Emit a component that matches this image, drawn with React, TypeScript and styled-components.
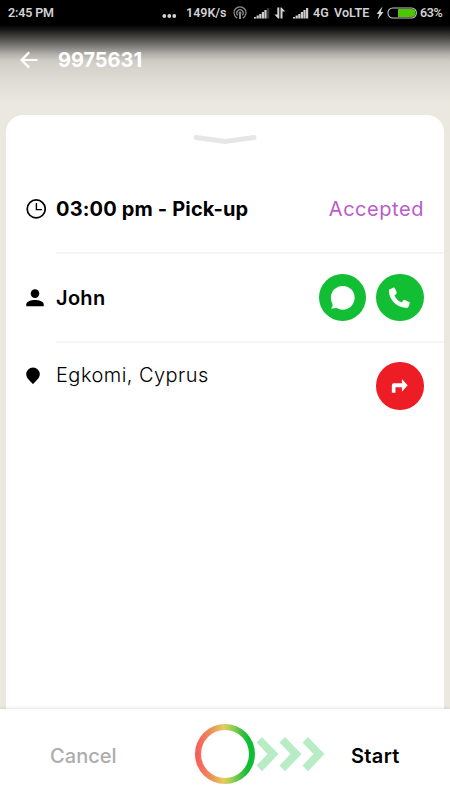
import React from "react";
import styled, { createGlobalStyle } from "styled-components";

const Global = createGlobalStyle`
  * { box-sizing: border-box; }
  body { margin: 0; background: #ebe8e0; }
`;

const Screen = styled.div`
  width: 450px;
  height: 800px;
  overflow: hidden;
  display: flex;
  flex-direction: column;
  font-family: Inter, "Liberation Sans", sans-serif;
  background: linear-gradient(
    to bottom,
    #000 0, #000 25px, #1b1a1a 30px, #4a4947 38px, #7c7b77 46px,
    #b0aea9 54px, #cfccc6 61px, #d6d3cc 68px, #e1ded7 84px, #ebe8e0 102px
  );
`;

const StatusBar = styled.div`
  height: 26px;
  flex: none;
  display: flex;
  align-items: center;
  padding-left: 8px;
  color: #d2d2d2;
  font-family: Roboto, "Liberation Sans", sans-serif;

  svg { flex: none; display: block; }
`;

const StatusText = styled.span<{ $w: number; $ls?: number }>`
  width: ${(p) => p.$w}px;
  flex: none;
  font-size: 12.5px;
  font-weight: 600;
  line-height: 26px;
  white-space: nowrap;
  letter-spacing: ${(p) => p.$ls ?? 0}px;
`;

const Header = styled.header`
  height: 89px;
  flex: none;
  display: flex;
  align-items: flex-start;
  padding: 22px 0 0 20px;
`;

const BackButton = styled.button`
  width: 38px;
  height: 24px;
  padding: 0 0 1px;
  border: 0;
  background: none;

  svg { display: block; }
`;

const Label = styled.span<{ $weight: number; $ls?: number; $color?: string }>`
  font-size: 20px;
  font-weight: ${(p) => p.$weight};
  letter-spacing: ${(p) => p.$ls ?? 0}px;
  color: ${(p) => p.$color ?? "#000"};
  line-height: 24px;
  white-space: nowrap;
`;

const PersonName = styled(Label)`
  padding-top: 12px;
`;

const Sheet = styled.main`
  flex: 1;
  margin: 0 6px;
  border-radius: 17px 17px 0 0;
  background: #fff;
`;

const Handle = styled.div`
  height: 50px;
  display: flex;
  justify-content: center;
  padding-top: 19px;
`;

const Row = styled.section`
  height: 89px;
  display: flex;
  padding-left: 20px;
`;

const IconCell = styled.div<{ $top: number }>`
  width: 30px;
  flex: none;
  padding-top: ${(p) => p.$top}px;

  svg { display: block; }
`;

const RowBody = styled.div<{ $line?: boolean; $top: number }>`
  flex: 1;
  display: flex;
  justify-content: space-between;
  align-items: flex-start;
  padding: ${(p) => p.$top}px 20px 0 0;
  border-bottom: ${(p) => (p.$line ? "2px solid #f5f5f5" : "0")};
`;

const Actions = styled.div<{ $lift?: number }>`
  display: flex;
  gap: 10px;
  margin-top: ${(p) => -(p.$lift ?? 0)}px;
  padding-right: 0.3px;
`;

const RoundButton = styled.button<{ $bg: string }>`
  width: 47.5px;
  height: 47.5px;
  padding: 0;
  border: 0;
  border-radius: 50%;
  background: ${(p) => p.$bg};

  svg { display: block; width: 100%; height: 100%; }
`;

const Footer = styled.footer`
  height: 91px;
  flex: none;
  display: flex;
  align-items: flex-start;
  padding-left: 50px;
  background: #fff;
  box-shadow: 0 -1px 3px rgba(0, 0, 0, 0.1);
  z-index: 1;
`;

const FooterSlot = styled.div<{ $w: number }>`
  width: ${(p) => p.$w}px;
  padding-top: 35px;
  flex: none;
`;

const Slider = styled.div`
  width: 156px;
  display: flex;
  padding-top: 15px;
`;

const Ring = styled.div`
  width: 60px;
  height: 60px;
  padding: 6px;
  border-radius: 50%;
  background: linear-gradient(to right, #fb5a5a 2%, #ec8d58 25%, #e6cd5c 48%, #a2cf55 60%, #3fc043 78%, #10be35 88%);

  &::after {
    content: "";
    display: block;
    height: 48px;
    border-radius: 50%;
    background: #fff;
  }
`;

const SignalBars = ({ weakLast }: { weakLast?: boolean }) => (
  <svg width="16" height="12" viewBox="0 0 16 12">
    {[1.5, 3, 4.5, 6.5, 8.5, 10.5].map((h, i) => (
      <rect key={i} x={i * 2.6} y={11.5 - h} width="2.2" height={h} fill={weakLast && i === 5 ? "#383838" : "#cecece"} />
    ))}
  </svg>
);

export default function App() {
  return (
    <Screen>
      <Global />
      <StatusBar>
        <StatusText $w={154} $ls={-0.15}>2:45 PM</StatusText>
        <svg width="24" height="26" viewBox="0 0 24 26" fill="#d2d2d2">
          <circle cx="2.3" cy="16" r="1.9" /><circle cx="7.3" cy="16" r="1.9" /><circle cx="12.3" cy="16" r="1.9" />
        </svg>
        <StatusText $w={47}>149K/s</StatusText>
        <svg width="21" height="14" viewBox="0 0 21 14" fill="none" stroke="#8d8d8d" strokeWidth="1.2">
          <path d="M4.2 12.1a6 6 0 1 1 5.6 0" />
          <path d="M4.7 9.3a3.2 3.2 0 1 1 4.6 0" />
          <circle cx="7" cy="7" r=".8" fill="#8d8d8d" />
          <path d="M7 8v5" strokeWidth="2" />
        </svg>
        <SignalBars weakLast />
        <svg width="23" height="14" viewBox="0 0 23 14" fill="#d2d2d2">
          <path d="M7.3 1.5H9.3V12.5H8L4.5 8.5H7.3z" />
          <path d="M10.5 1.5H11.5L15.2 5.5H12.5V12.5H10.5z" />
        </svg>
        <SignalBars />
        <svg width="4" height="12" />
        <StatusText $w={21}>4G</StatusText>
        <StatusText $w={41} $ls={0.1}>VoLTE</StatusText>
        <svg width="45" height="14" viewBox="0 0 45 14">
          <path d="M7.5.5 1.5 8H4.2l-1.5 5.5L8.5 6H5.8z" fill="#d2d2d2" />
          <rect x="12.9" y="2" width="28.5" height="10" rx="5" fill="#000" stroke="#c8c8c8" strokeWidth="1.1" />
          <path d="M23 3H36.5a4 4 0 0 1 4 4A4 4 0 0 1 36.5 11H23z" fill="#4cc600" />
        </svg>
        <StatusText $w={30} $ls={-0.35}>63%</StatusText>
      </StatusBar>
      <Header>
        <BackButton aria-label="Back">
          <svg width="18" height="18" viewBox="0 0 18 18" fill="none" stroke="#fff" strokeWidth="2.2">
            <path d="M17.5 9H2M9.2 1.4 1.6 9l7.6 7.6" />
          </svg>
        </BackButton>
        <Label $weight={700} $color="#fff" $ls={-0.05}>9975631</Label>
      </Header>
      <Sheet>
        <Handle>
          <svg width="64" height="12" viewBox="0 0 64 12">
            <path d="M3 3.5 32 7.5 61 3.5" fill="none" stroke="#e6e6e6" strokeWidth="5" strokeLinecap="round" />
          </svg>
        </Handle>
        <Row>
          <IconCell $top={34}>
            <svg width="20" height="20" viewBox="0 0 20 20" fill="none" stroke="#000">
              <circle cx="10.2" cy="9.9" r="9" strokeWidth="1.7" />
              <path d="M10.4 4v6.6H16" strokeWidth="1.4" />
            </svg>
          </IconCell>
          <RowBody $line $top={32}>
            <Label $weight={700} $ls={0.16}>03:00 pm - Pick-up</Label>
            <Label $weight={400} $ls={0.55} $color="#b95cc8">Accepted</Label>
          </RowBody>
        </Row>
        <Row>
          <IconCell $top={35}>
            <svg width="18" height="18" viewBox="0 0 18 18">
              <circle cx="9" cy="4.6" r="4.3" />
              <path d="M.3 17.3v-2.1C.3 12.4 5.5 11 9 11s8.7 1.4 8.7 4.2v2.1z" />
            </svg>
          </IconCell>
          <RowBody $line $top={20}>
            <PersonName $weight={600} $ls={0.3}>John</PersonName>
            <Actions $lift={0.3}>
              <RoundButton $bg="#12be34" aria-label="Message">
                <svg viewBox="0 0 48 48" fill="#fff">
                  <circle cx="24" cy="24" r="12" />
                  <path d="M13.3 29.5c1 2.5.2 4-1.3 5.2 2.6.6 5.6 0 8-1.5z" />
                </svg>
              </RoundButton>
              <RoundButton $bg="#12be34" aria-label="Call">
                <svg viewBox="0 0 48 48" fill="#fff">
                  <path d="M14 15.3 17.6 13.6c.6-.2 1 0 1.3.6l2 4.3c.2.6.1 1-.3 1.4l-1.9 1.7c1.4 3.2 3.8 5.6 7.2 7l1.8-2c.4-.5.9-.6 1.5-.3l4.3 2c.6.3.8.7.6 1.3l-1.3 3.7c-.3.7-.8 1-1.5 1C21.5 34.3 13 26 13 16.9c0-.8.3-1.3 1-1.6z" />
                </svg>
              </RoundButton>
            </Actions>
          </RowBody>
        </Row>
        <Row>
          <IconCell $top={24}>
            <svg width="14" height="18" viewBox="0 0 14 18">
              <path d="M7 .5a6.8 6.8 0 0 1 6.8 6.8C13.8 11.5 9.5 14 7 17.3 4.5 14 .2 11.5.2 7.3A6.8 6.8 0 0 1 7 .5z" />
            </svg>
          </IconCell>
          <RowBody $top={20}>
            <Label $weight={300} $ls={0.46}>Egkomi, Cyprus</Label>
            <Actions $lift={0.7}>
              <RoundButton $bg="#ee1c25" aria-label="Directions">
                <svg viewBox="0 0 48 48" fill="#fff">
                  <path d="M16 31v-7.5q0-2 2-2h8.2V17.2L32 23.6l-5.8 6.5v-4.5h-6.5V31z" />
                </svg>
              </RoundButton>
            </Actions>
          </RowBody>
        </Row>
      </Sheet>
      <Footer>
        <FooterSlot $w={145}>
          <Label $weight={500} $ls={0.05} $color="#adadad">Cancel</Label>
        </FooterSlot>
        <Slider>
          <Ring />
          <svg width="72" height="60" viewBox="0 0 72 60" fill="#b7ecc4">
            {[0, 23, 46].map((x) => (
              <path key={x} transform={`translate(${x})`} d="M7 13 23.5 30 7 47.3 1.5 41.6 12.5 30 1.5 18.5z" />
            ))}
          </svg>
        </Slider>
        <FooterSlot $w={90}>
          <Label $weight={600} $ls={0.35}>Start</Label>
        </FooterSlot>
      </Footer>
    </Screen>
  );
}
